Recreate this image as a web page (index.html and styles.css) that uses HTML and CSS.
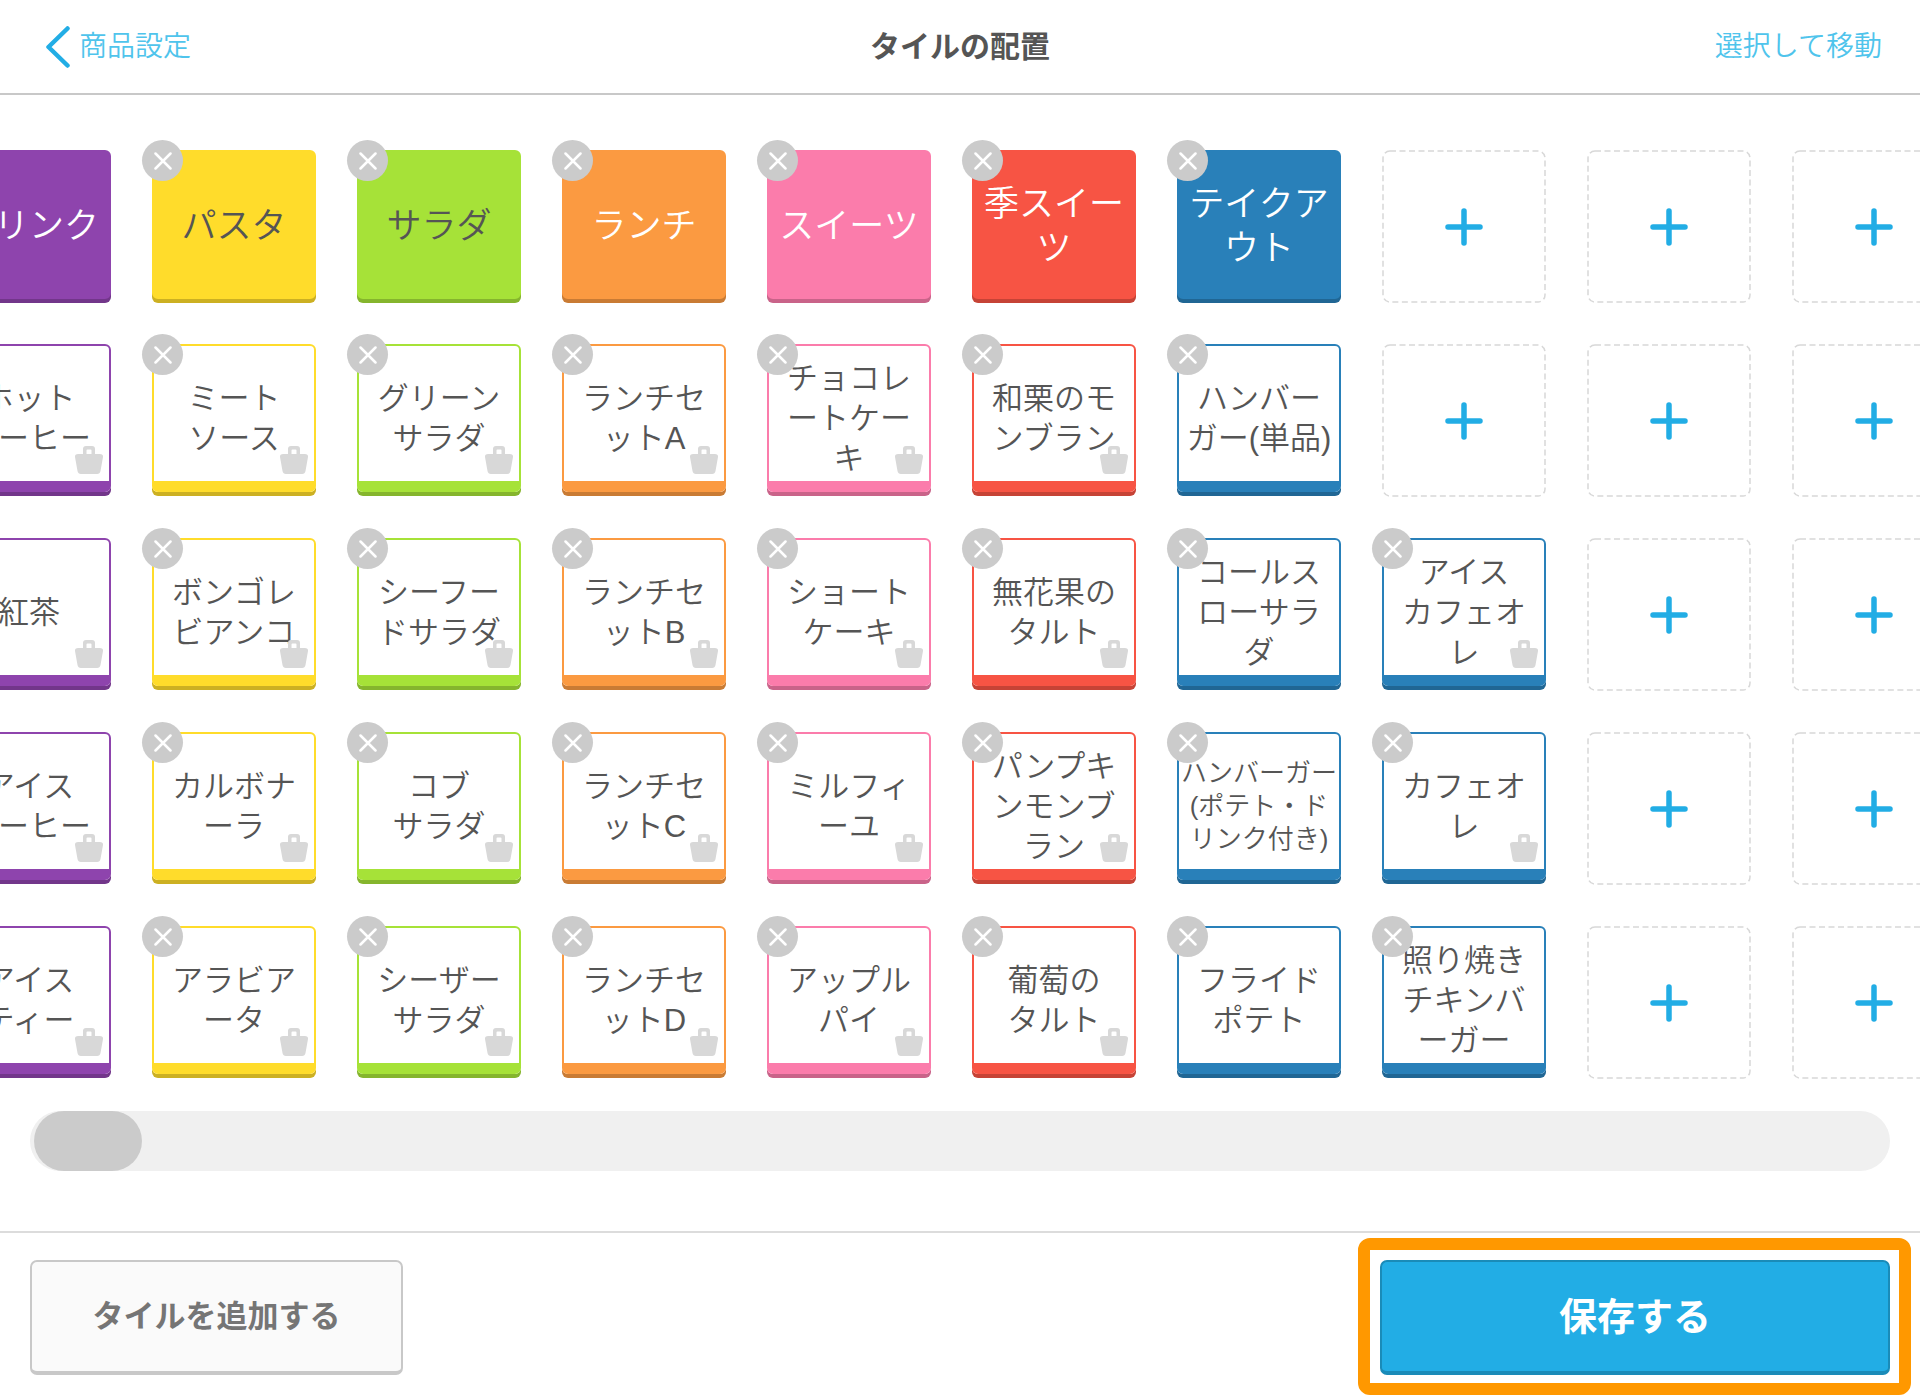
FILE: index.html
```html
<!DOCTYPE html>
<html lang="ja">
<head>
    <meta charset="UTF-8">
    <meta name="viewport" content="width=device-width, initial-scale=1.0">
    <title>タイルの配置</title>
    <link rel="stylesheet" href="styles.css">
</head>
<body>
    <svg class="symbols" aria-hidden="true">
        <symbol id="icon-close" viewBox="0 0 18 18">
            <path d="M1.500 1.500L16.500 16.500M16.500 1.500L1.500 16.500" fill="none" stroke="#fff" stroke-width="2.500" stroke-linecap="round"/>
        </symbol>
        <symbol id="icon-bag" viewBox="0 0 28 28">
            <path fill-rule="evenodd" d="M8 8V3Q8 0 11 0H17Q20 0 20 3V8H25Q28.500 8 28 11L25.500 25Q25 28 22 28H6Q3 28 2.500 25L0 11Q-.5 8 3 8ZM11.500 8H16.500V4.500Q16.500 3.500 15.500 3.500H12.500Q11.500 3.500 11.500 4.500Z" fill="#d8d8d8"/>
        </symbol>
        <symbol id="icon-empty" viewBox="0 0 164 153">
            <rect x="1" y="1" width="162" height="151" rx="7" fill="none" stroke="#d8d8d8" stroke-width="1.500" stroke-dasharray="6 3.500"/>
            <path d="M82 61V93M66 77H98" fill="none" stroke="#22ade5" stroke-width="5.500" stroke-linecap="round"/>
        </symbol>
    </svg>

    <header class="navbar">
        <a href="#" class="nav-link nav-back">
            <svg class="chevron" viewBox="0 0 24 42" aria-hidden="true">
                <path d="M21.500 2.500L2.500 21L21.500 39.500" fill="none" stroke="#22ade5" stroke-width="4.500" stroke-linecap="round" stroke-linejoin="round"/>
            </svg>
            商品設定
        </a>
        <h1>タイルの配置</h1>
        <a href="#" class="nav-link nav-move">選択して移動</a>
    </header>

    <main>
        <div class="board">
            <div class="tiles" id="tiles"></div>
        </div>
        <div class="scroller">
            <input type="range" min="0" max="100" value="0" aria-label="横スクロール">
        </div>
    </main>

    <footer class="actions">
        <button type="button" class="btn">タイルを追加する</button>
        <div class="highlight">
            <button type="button" class="btn btn-primary">保存する</button>
        </div>
    </footer>

    <script src="tiles.js"></script>
</body>
</html>
```
FILE: styles.css
```css
* {
    box-sizing: border-box;
    margin: 0;
    padding: 0;
}

body {
    display: flex;
    flex-direction: column;
    min-height: 100vh;
    background: #fff;
    color: #555;
    font-family: "Liberation Sans", "Noto Sans CJK JP", sans-serif;
    font-weight: 350;
    overflow-x: hidden;
}

button,
input {
    font-family: inherit;
    border: none;
    cursor: pointer;
}

.symbols {
    display: none;
}

/* ナビゲーションバー */
.navbar {
    display: grid;
    grid-template-columns: 1fr auto 1fr;
    align-items: center;
    height: 95px;
    padding: 0 38px;
    border-bottom: 2px solid #c8c8c8;
    line-height: 40px;
}

.navbar h1 {
    font-size: 30px;
    font-weight: 700;
}

.nav-link {
    color: #4fc4ec;
    font-size: 28px;
    text-decoration: none;
}

.nav-back {
    display: flex;
    align-items: center;
    gap: 9px;
    padding-left: 8px;
}

.nav-move {
    justify-self: end;
}

.chevron {
    width: 24px;
    height: 42px;
}

/* タイル一覧 */
.board {
    overflow: hidden;
    padding: 55px 0 32px;
}

.tiles {
    display: grid;
    grid-auto-flow: column;
    grid-template-rows: repeat(5, 153px);
    grid-auto-columns: 164px;
    gap: 41px;
    margin-left: -53px;
}

.tile {
    position: relative;
    display: flex;
    align-items: center;
    justify-content: center;
    height: 148px;
    padding-top: 10px;
    border: 2px solid var(--color);
    border-bottom-width: 11px;
    border-radius: 6px;
    box-shadow: 0 4px 0 var(--shade);
    font-size: 31px;
    line-height: 40px;
    text-align: center;
    white-space: nowrap;
}

.tile.small {
    font-size: 26px;
    line-height: 33px;
}

.tile.category {
    height: 149px;
    padding-top: 2px;
    border-bottom-width: 2px;
    background: var(--color);
    color: #fff;
    font-size: 35px;
    line-height: 44px;
}

.tile.category.dark-text {
    color: #555;
}

.purple { --color: #8e44ad; --shade: #72368a; }
.yellow { --color: #ffdc2b; --shade: #ccb022; }
.green  { --color: #a6e238; --shade: #85b52d; }
.orange { --color: #fb9a41; --shade: #c97b34; }
.pink   { --color: #fb7cab; --shade: #c96389; }
.red    { --color: #f75444; --shade: #c64336; }
.blue   { --color: #2980b9; --shade: #206694; }

.delete {
    position: absolute;
    top: -12px;
    left: -12px;
    display: flex;
    align-items: center;
    justify-content: center;
    width: 41px;
    height: 41px;
    border-radius: 50%;
    background: #cbcbcb;
}

.delete svg {
    width: 18px;
    height: 18px;
}

.bag {
    position: absolute;
    right: 6px;
    bottom: 7px;
    width: 28px;
    height: 28px;
}

.empty {
    background: none;
}

.empty svg {
    display: block;
    width: 164px;
    height: 153px;
}

/* スクロールバー */
.scroller {
    padding: 0 30px;
}

.scroller input {
    display: block;
    width: 100%;
    height: 60px;
    padding: 0 4px;
    border-radius: 30px;
    background: #f0f0f0;
    appearance: none;
    -webkit-appearance: none;
}

.scroller input::-webkit-slider-thumb {
    -webkit-appearance: none;
    width: 108px;
    height: 60px;
    border-radius: 30px;
    background: #cbcbcb;
}

/* フッター */
.actions {
    display: flex;
    justify-content: space-between;
    margin-top: auto;
    padding: 27px 30px 25px;
    border-top: 2px solid #dcdcdc;
}

.btn {
    width: 373px;
    height: 115px;
    border: 2px solid #c8c8c8;
    border-bottom-width: 4px;
    border-radius: 7px;
    background: #fafafa;
    color: #757575;
    font-size: 31px;
    font-weight: 700;
    line-height: 40px;
}

.btn-primary {
    width: 510px;
    border-color: #1a8bb8;
    background: #22ade5;
    color: #fff;
    font-size: 38px;
}

.highlight {
    position: relative;
}

.highlight::after {
    content: "";
    position: absolute;
    inset: -22px -21px -20px -22px;
    border: 12px solid #ff9800;
    border-radius: 12px;
    pointer-events: none;
}
```
FILE: tiles.js
```js
// 1列 = カテゴリー + 商品4つ。null は空きマス
const columns = [
    { color: 'purple', tiles: ['ドリンク', 'ホット<br>コーヒー', '紅茶', 'アイス<br>コーヒー', 'アイス<br>ティー'] },
    { color: 'yellow', darkText: true, tiles: ['パスタ', 'ミート<br>ソース', 'ボンゴレ<br>ビアンコ', 'カルボナ<br>ーラ', 'アラビア<br>ータ'] },
    { color: 'green', darkText: true, tiles: ['サラダ', 'グリーン<br>サラダ', 'シーフー<br>ドサラダ', 'コブ<br>サラダ', 'シーザー<br>サラダ'] },
    { color: 'orange', tiles: ['ランチ', 'ランチセ<br>ットA', 'ランチセ<br>ットB', 'ランチセ<br>ットC', 'ランチセ<br>ットD'] },
    { color: 'pink', tiles: ['スイーツ', 'チョコレ<br>ートケー<br>キ', 'ショート<br>ケーキ', 'ミルフィ<br>ーユ', 'アップル<br>パイ'] },
    { color: 'red', tiles: ['季スイー<br>ツ', '和栗のモ<br>ンブラン', '無花果の<br>タルト', 'パンプキ<br>ンモンブ<br>ラン', '葡萄の<br>タルト'] },
    { color: 'blue', noBag: [1, 2, 3, 4], small: [3], tiles: ['テイクア<br>ウト', 'ハンバー<br>ガー(単品)', 'コールス<br>ローサラ<br>ダ', 'ハンバーガー<br>(ポテト・ド<br>リンク付き)', 'フライド<br>ポテト'] },
    { color: 'blue', noBag: [4], tiles: [null, null, 'アイス<br>カフェオ<br>レ', 'カフェオ<br>レ', '照り焼き<br>チキンバ<br>ーガー'] },
    { tiles: [null, null, null, null, null] },
    { tiles: [null, null, null, null, null] }
];

function renderTile(column, label, row) {
    if (label === null) {
        return '<button type="button" class="empty" aria-label="追加"><svg><use href="#icon-empty"/></svg></button>';
    }

    const classes = ['tile', column.color];
    if (row === 0) classes.push('category');
    if (row === 0 && column.darkText) classes.push('dark-text');
    if (column.small && column.small.includes(row)) classes.push('small');

    const hasBag = row > 0 && !(column.noBag && column.noBag.includes(row));

    return `
        <div class="${classes.join(' ')}">
            <span>${label}</span>
            ${hasBag ? '<svg class="bag"><use href="#icon-bag"/></svg>' : ''}
            <button type="button" class="delete" aria-label="削除"><svg><use href="#icon-close"/></svg></button>
        </div>
    `;
}

document.getElementById('tiles').innerHTML = columns
    .map(column => column.tiles.map((label, row) => renderTile(column, label, row)).join(''))
    .join('');
```
